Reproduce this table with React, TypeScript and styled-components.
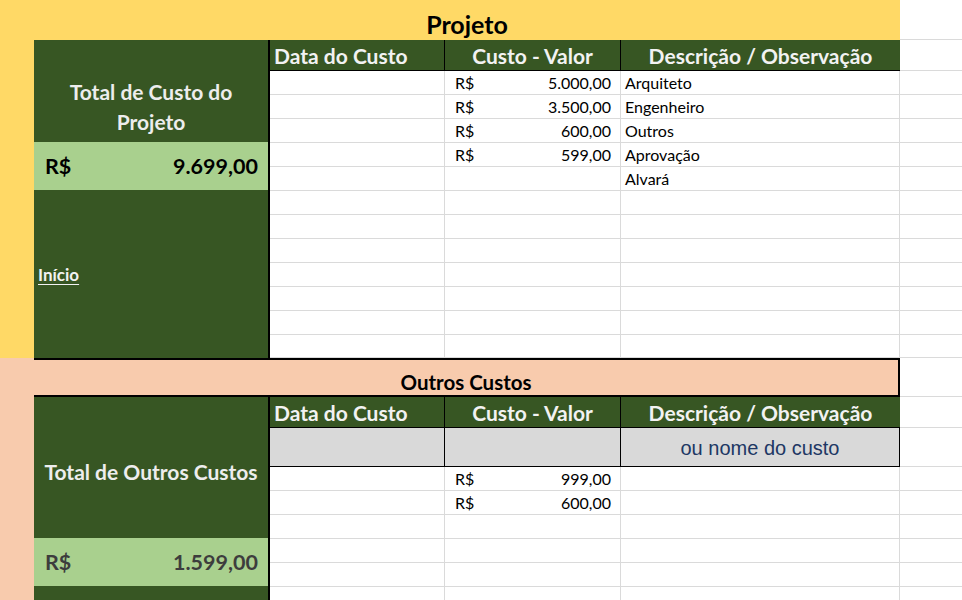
import styled, { createGlobalStyle } from "styled-components";

const GlobalStyle = createGlobalStyle`
  html, body {
    margin: 0;
    padding: 0;
    background: #ffffff;
  }
  body {
    font-family: Lato, "Liberation Sans", sans-serif;
  }
`;

// cores da planilha
const YELLOW = "#ffd966";
const PEACH = "#f8cbad";
const DARK_GREEN = "#375623";
const LIGHT_GREEN = "#a9d08e";
const GRID = "#dadada";

const Sheet = styled.div`
  width: 962px;
  height: 600px;
  overflow: hidden;
  background: #fff;
`;

const Section = styled.section<{ $rows: string }>`
  display: grid;
  grid-template-columns: 34px 236px 175px 176px 279px 62px;
  grid-template-rows: ${(p) => p.$rows};
`;

const Band = styled.div<{ $color: string }>`
  grid-column: 1;
  grid-row: 1 / -1;
  background: ${(p) => p.$color};
`;

const Title = styled.div<{ $boxed?: boolean; $color: string }>`
  grid-column: 2 / 6;
  box-sizing: border-box;
  display: flex;
  align-items: flex-end;
  justify-content: center;
  background: ${(p) => p.$color};
  color: #000;
  font-weight: 700;
  font-size: ${(p) => (p.$boxed ? "20.5px" : "25px")};
  padding-bottom: ${(p) => (p.$boxed ? "1px" : "1px")};
  border-top: ${(p) => (p.$boxed ? "2px solid #000" : "none")};
  border-bottom: ${(p) => (p.$boxed ? "2px solid #000" : "none")};
  border-right: ${(p) => (p.$boxed ? "2px solid #000" : "none")};
`;

const Spare = styled.div`
  grid-column: 6;
  box-sizing: border-box;
  border-bottom: 1px solid ${GRID};
`;

const TotalBlock = styled.div`
  grid-column: 2;
  grid-row: 2 / -1;
  box-sizing: border-box;
  display: flex;
  flex-direction: column;
  background: ${DARK_GREEN};
  border-right: 2px solid #000;
`;

const TotalLabel = styled.div<{ $height: number; $shift: number }>`
  box-sizing: border-box;
  height: ${(p) => p.$height}px;
  padding-top: ${(p) => p.$shift}px;
  display: flex;
  align-items: center;
  justify-content: center;
  text-align: center;
  white-space: pre-line;
  color: #ededed;
  font-weight: 700;
  font-size: 21px;
  line-height: 30px;
`;

const TotalAmount = styled.div<{ $muted?: boolean }>`
  height: 48px;
  display: flex;
  align-items: center;
  justify-content: space-between;
  padding: 0 10px 0 11px;
  background: ${LIGHT_GREEN};
  color: ${(p) => (p.$muted ? "#3d3d3d" : "#000")};
  font-weight: 700;
  font-size: 21.5px;
`;

const TotalRest = styled.div`
  flex: 1;
  display: flex;
  align-items: center;
  padding-left: 4px;
`;

const HomeLink = styled.a`
  color: #f2f2f2;
  font-weight: 700;
  font-size: 17px;
  text-decoration: underline;
  text-underline-offset: 3px;
  cursor: pointer;
`;

const HeadCell = styled.div<{ $align: "left" | "center"; $last?: boolean }>`
  box-sizing: border-box;
  display: flex;
  align-items: center;
  justify-content: ${(p) => (p.$align === "left" ? "flex-start" : "center")};
  padding: 0 4px;
  background: ${DARK_GREEN};
  color: #f2f2f2;
  font-weight: 700;
  font-size: 21px;
  border-bottom: 1px solid #000;
  border-right: ${(p) => (p.$last ? "none" : "1px solid #000")};
`;

const Cell = styled.div<{ $hint?: boolean }>`
  box-sizing: border-box;
  display: flex;
  align-items: center;
  padding: 0 4px;
  font-size: 16px;
  color: #000;
  background: ${(p) => (p.$hint ? "#d9d9d9" : "#fff")};
  border-right: 1px solid ${(p) => (p.$hint ? "#000" : GRID)};
  border-bottom: 1px solid ${(p) => (p.$hint ? "#000" : GRID)};
`;

const MoneyCell = styled(Cell)`
  justify-content: space-between;
  padding: 0 9px 0 10px;
`;

const HintText = styled.span`
  flex: 1;
  text-align: center;
  font-family: "Liberation Sans", Arial, sans-serif;
  font-size: 20px;
  color: #203764;
  padding-top: 2px;
`;

type Row = { value?: string; desc?: string };

const projectRows: Row[] = [
  { value: "5.000,00", desc: "Arquiteto" },
  { value: "3.500,00", desc: "Engenheiro" },
  { value: "600,00", desc: "Outros" },
  { value: "599,00", desc: "Aprovação" },
  { desc: "Alvará" },
  {}, {}, {}, {}, {}, {}, {},
];

const otherRows: Row[] = [
  { value: "999,00" },
  { value: "600,00" },
  {}, {}, {}, {},
];

const Header = () => (
  <>
    <HeadCell $align="left">Data do Custo</HeadCell>
    <HeadCell $align="center">Custo - Valor</HeadCell>
    <HeadCell $align="center" $last>
      Descrição / Observação
    </HeadCell>
    <Spare />
  </>
);

const DataRows = ({ rows }: { rows: Row[] }) => (
  <>
    {rows.map((r, i) => (
      <Row key={i} row={r} />
    ))}
  </>
);

const Row = ({ row }: { row: Row }) => (
  <>
    <Cell />
    {row.value ? (
      <MoneyCell>
        <span>R$</span>
        <span>{row.value}</span>
      </MoneyCell>
    ) : (
      <Cell />
    )}
    <Cell>{row.desc}</Cell>
    <Spare />
  </>
);

export default function App() {
  return (
    <Sheet>
      <GlobalStyle />

      {/* Projeto */}
      <Section $rows="40px 31px repeat(11, 24px) 23px">
        <Band $color={YELLOW} />
        <Title $color={YELLOW}>Projeto</Title>
        <Spare />
        <TotalBlock>
          <TotalLabel $height={102} $shift={32}>
            {"Total de Custo do\nProjeto"}
          </TotalLabel>
          <TotalAmount>
            <span>R$</span>
            <span>9.699,00</span>
          </TotalAmount>
          <TotalRest>
            <HomeLink>Início</HomeLink>
          </TotalRest>
        </TotalBlock>
        <Header />
        <DataRows rows={projectRows} />
      </Section>

      {/* Outros Custos */}
      <Section $rows="39px 31px 39px repeat(6, 24px)">
        <Band $color={PEACH} />
        <Title $color={PEACH} $boxed>
          Outros Custos
        </Title>
        <Spare />
        <TotalBlock>
          <TotalLabel $height={141} $shift={9}>
            Total de Outros Custos
          </TotalLabel>
          <TotalAmount $muted>
            <span>R$</span>
            <span>1.599,00</span>
          </TotalAmount>
          <TotalRest />
        </TotalBlock>
        <Header />
        <Cell $hint />
        <Cell $hint />
        <Cell $hint>
          <HintText>ou nome do custo</HintText>
        </Cell>
        <Spare />
        <DataRows rows={otherRows} />
      </Section>
    </Sheet>
  );
}
